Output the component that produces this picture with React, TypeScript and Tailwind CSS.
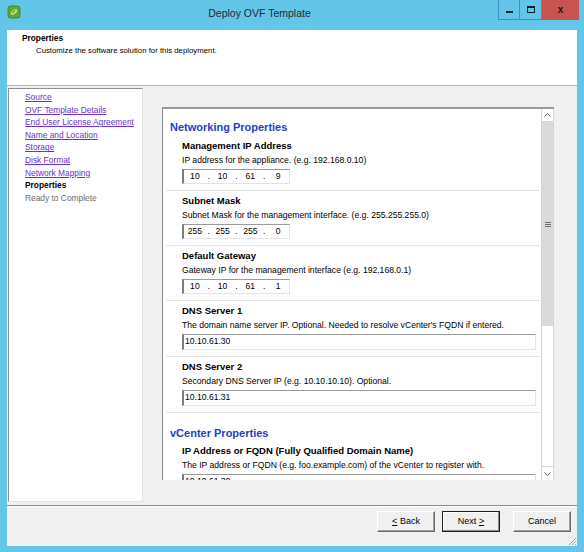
import React from 'react'

const FONT = { fontFamily: '"Liberation Sans", Arial, sans-serif' }

type IpField = { title: string; desc: string; octets?: string[]; value?: string; h: string }

const networking: IpField[] = [
  { title: 'Management IP Address', desc: 'IP address for the appliance. (e.g. 192.168.0.10)', octets: ['10', '10', '61', '9'], h: 'h-[55px]' },
  { title: 'Subnet Mask', desc: 'Subnet Mask for the management interface. (e.g. 255.255.255.0)', octets: ['255', '255', '255', '0'], h: 'h-[55px]' },
  { title: 'Default Gateway', desc: 'Gateway IP for the management interface (e.g. 192.168.0.1)', octets: ['10', '10', '61', '1'], h: 'h-[55px]' },
  { title: 'DNS Server 1', desc: "The domain name server IP. Optional. Needed to resolve vCenter's FQDN if entered.", value: '10.10.61.30', h: 'h-[56px]' },
  { title: 'DNS Server 2', desc: 'Secondary DNS Server IP (e.g. 10.10.10.10). Optional.', value: '10.10.61.31', h: 'h-[56px]' }
]

const steps = [
  'Source',
  'OVF Template Details',
  'End User License Agreement',
  'Name and Location',
  'Storage',
  'Disk Format',
  'Network Mapping'
]

function AppIcon() {
  return (
    <svg width="14" height="14" viewBox="0 0 14 14">
      <rect x="1" y="1" width="12" height="12" rx="2.5" fill="#5da83a" stroke="#3d7a22" strokeWidth="0.8" />
      <path d="M4 7.5 L7 4.5 L10 4.5 L10 6.5 L7 9.5 L4 9.5 Z" fill="#d9e96a" />
      <path d="M5.5 8 L8 5.5" stroke="#5da83a" strokeWidth="1.2" />
    </svg>
  )
}

function IpBox({ octets }: { octets: string[] }) {
  return (
    <div className="mt-[3px] flex h-[15px] w-[108px] items-center border-t border-l-2 border-b border-r border-t-[#9a9a9a] border-l-[#7d7d7d] border-b-[#e3e3e3] border-r-[#e3e3e3] bg-white text-[8.6px] leading-[13px]">
      {octets.map((o, i) => (
        <React.Fragment key={i}>
          {i > 0 && <span className="w-[6px] text-center">.</span>}
          <span className="w-[22px] text-center">{o}</span>
        </React.Fragment>
      ))}
    </div>
  )
}

function TextBox({ value }: { value: string }) {
  return (
    <div className="mt-[3px] h-[16px] w-[354px] border-t border-l-2 border-b border-r border-t-[#9a9a9a] border-l-[#7d7d7d] border-b-[#e3e3e3] border-r-[#e3e3e3] bg-white pl-[1px] text-[8.6px] leading-[13px]">
      {value}
    </div>
  )
}

function FieldRow({ f }: { f: IpField }) {
  return (
    <div className={`${f.h} ml-[3px] mr-[2px] border-b border-[#e3e3e3] pl-[16px] pt-[4px]`}>
      <div className="text-[9.5px] font-bold leading-[12px]">{f.title}</div>
      <div className="mt-[2px] text-[8.6px] leading-[12px]">{f.desc}</div>
      {f.octets ? <IpBox octets={f.octets} /> : <TextBox value={f.value ?? ''} />}
    </div>
  )
}

function Chevron({ up }: { up?: boolean }) {
  return (
    <svg width="7" height="4" viewBox="0 0 7 4">
      <path d={up ? 'M0.5 3.5 L3.5 0.5 L6.5 3.5' : 'M0.5 0.5 L3.5 3.5 L6.5 0.5'} fill="none" stroke="#606060" strokeWidth="1" />
    </svg>
  )
}

function WizardButton({ children, primary }: { children: React.ReactNode; primary?: boolean }) {
  return (
    <div
      className={`flex h-[21px] w-[58px] items-center justify-center bg-[#f0f0f0] text-[9px] ${
        primary
          ? 'border border-[#1e1e1e] shadow-[inset_-1px_-1px_0_#8a8a8a,inset_1px_1px_0_#ffffff]'
          : 'border border-t-white border-l-white border-b-[#6b6b6b] border-r-[#6b6b6b] shadow-[inset_-1px_-1px_0_#a0a0a0]'
      }`}
    >
      {children}
    </div>
  )
}

export default function App() {
  return (
    <div className="flex h-[552px] w-[584px] flex-col bg-[#63c6e8] text-black" style={FONT}>
      {/* title bar */}
      <div className="flex h-[30px] shrink-0">
        <div className="w-[21px] pl-[7px] pt-[5px]">
          <AppIcon />
        </div>
        <div className="flex-1 pt-[6px] text-center text-[10.5px] leading-[14px] text-[#1b2b3a]">Deploy OVF Template</div>
        <div className="mr-[5px] flex h-[20px]">
          <div className="flex w-[22px] items-end justify-center border border-t-0 border-[#3f93bd] pb-[6px]">
            <div className="h-[2px] w-[7px] bg-[#102030]" />
          </div>
          <div className="flex w-[22px] items-center justify-center border border-l-0 border-t-0 border-[#3f93bd]">
            <div className="h-[7px] w-[8px] border border-t-2 border-[#102030]" />
          </div>
          <div className="flex w-[37px] items-center justify-center bg-[#c9534f] text-[10px] font-bold leading-none text-[#2a1010]">x</div>
        </div>
      </div>

      {/* body */}
      <div className="mx-[7px] mb-[6px] flex flex-1 flex-col bg-[#f0f0f0]">
        <div className="h-[56px] shrink-0 border-b border-[#b4b4b4] bg-white pl-[15px] pt-[2px]">
          <div className="text-[8.3px] font-bold leading-[11px] mt-[1px]">Properties</div>
          <div className="ml-[14px] mt-[1px] text-[7.8px] leading-[11px]">Customize the software solution for this deployment.</div>
        </div>

        <div className="flex h-[419px] shrink-0">
          {/* step list */}
          <div className="ml-[1px] mt-[2px] h-[414px] w-[135px] border border-t-[#8f8f8f] border-l-[#8f8f8f] border-b-[#e3e3e3] border-r-[#e3e3e3] bg-white pl-[16px] pt-[2px] text-[8.4px] leading-[12.6px]">
            {steps.map((s) => (
              <div key={s} className="text-[#6b2fd6] underline">
                {s}
              </div>
            ))}
            <div className="font-bold">Properties</div>
            <div className="text-[#6d6d6d]">Ready to Complete</div>
          </div>

          {/* properties panel */}
          <div className="ml-[19px] mt-[21px] flex h-[373px] w-[392px] overflow-hidden border-t-2 border-l border-t-[#9a9a9a] border-l-[#8a8a8a] bg-white">
            <div className="flex-1 overflow-hidden">
              <div className="h-[27px] pl-[7px] pt-[11px] text-[11px] font-bold leading-[14px] text-[#1e40c8]">Networking Properties</div>
              {networking.map((f) => (
                <FieldRow key={f.title} f={f} />
              ))}
              <div className="h-[28px] pl-[7px] pt-[13px] text-[11px] font-bold leading-[14px] text-[#1e40c8]">vCenter Properties</div>
              <div className="ml-[3px] pl-[16px] pt-[4px]">
                <div className="text-[9.5px] font-bold leading-[12px]">IP Address or FQDN (Fully Qualified Domain Name)</div>
                <div className="mt-[2px] text-[8.6px] leading-[12px]">The IP address or FQDN (e.g. foo.example.com) of the vCenter to register with.</div>
                <TextBox value="10.10.61.30" />
              </div>
            </div>
            {/* scrollbar */}
            <div className="flex w-[13px] shrink-0 flex-col border-x border-[#d6d6d6] bg-[#f7f7f7]">
              <div className="flex h-[13px] items-center justify-center border-b border-[#d6d6d6] bg-white">
                <Chevron up />
              </div>
              <div className="flex h-[204px] items-center justify-center bg-[#dadada]">
                <div className="flex flex-col gap-[1px]">
                  <div className="h-px w-[6px] bg-[#707070]" />
                  <div className="h-px w-[6px] bg-[#707070]" />
                  <div className="h-px w-[6px] bg-[#707070]" />
                </div>
              </div>
              <div className="flex-1 bg-white" />
              <div className="flex h-[14px] shrink-0 items-center justify-center border-t border-[#d6d6d6] bg-white">
                <Chevron />
              </div>
            </div>
          </div>
        </div>

        {/* footer */}
        <div className="relative flex flex-1 justify-end border-t border-[#8a8a8a] pr-[6px] pt-[5px] shadow-[inset_0_1px_0_#ffffff]">
          <div className="flex gap-[7px]">
            <WizardButton>
              <span className="underline">&lt;</span>&nbsp;Back
            </WizardButton>
            <WizardButton primary>
              Next&nbsp;<span className="underline">&gt;</span>
            </WizardButton>
          </div>
          <div className="ml-[13px]">
            <WizardButton>Cancel</WizardButton>
          </div>
          <svg className="absolute bottom-0 right-0" width="10" height="10" viewBox="0 0 10 10">
            <path d="M9 2 L2 9 M9 5 L5 9 M9 8 L8 9" stroke="#a0a0a0" strokeWidth="1" />
          </svg>
        </div>
      </div>
    </div>
  )
}
